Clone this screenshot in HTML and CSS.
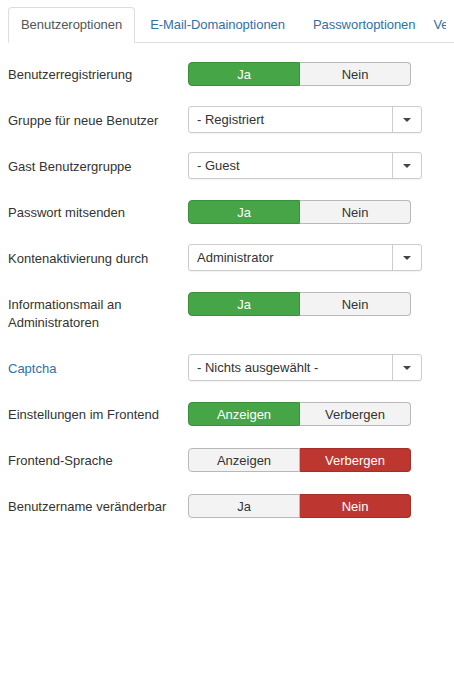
FILE: index.html
```html
<!DOCTYPE html>
<html lang="de">
<head>
<meta charset="utf-8">
<title>Benutzeroptionen</title>
<link rel="stylesheet" href="styles.css">
</head>
<body>
<div class="page">
  <div class="tabbar">
    <ul class="tabs">
      <li class="tab active"><a>Benutzeroptionen</a></li>
      <li class="tab"><a>E-Mail-Domainoptionen</a></li>
      <li class="tab"><a>Passwortoptionen</a></li>
      <li class="tab tab-more"><a>Verlauf</a></li>
    </ul>
  </div>
  <div class="form">
    <div class="row">
      <div class="label">Benutzerregistrierung</div>
      <div class="toggle"><span class="opt on-green">Ja</span><span class="opt">Nein</span></div>
    </div>
    <div class="row">
      <div class="label">Gruppe für neue Benutzer</div>
      <div class="select"><span class="val">- Registriert</span><span class="arrow"><i class="caret"></i></span></div>
    </div>
    <div class="row">
      <div class="label">Gast Benutzergruppe</div>
      <div class="select"><span class="val">- Guest</span><span class="arrow"><i class="caret"></i></span></div>
    </div>
    <div class="row">
      <div class="label">Passwort mitsenden</div>
      <div class="toggle"><span class="opt on-green">Ja</span><span class="opt">Nein</span></div>
    </div>
    <div class="row">
      <div class="label">Kontenaktivierung durch</div>
      <div class="select"><span class="val">Administrator</span><span class="arrow"><i class="caret"></i></span></div>
    </div>
    <div class="row">
      <div class="label">Informationsmail an Administratoren</div>
      <div class="toggle"><span class="opt on-green">Ja</span><span class="opt">Nein</span></div>
    </div>
    <div class="row">
      <div class="label link">Captcha</div>
      <div class="select"><span class="val">- Nichts ausgewählt -</span><span class="arrow"><i class="caret"></i></span></div>
    </div>
    <div class="row">
      <div class="label">Einstellungen im Frontend</div>
      <div class="toggle"><span class="opt on-green">Anzeigen</span><span class="opt">Verbergen</span></div>
    </div>
    <div class="row">
      <div class="label">Frontend-Sprache</div>
      <div class="toggle"><span class="opt">Anzeigen</span><span class="opt on-red">Verbergen</span></div>
    </div>
    <div class="row">
      <div class="label">Benutzername veränderbar</div>
      <div class="toggle"><span class="opt">Ja</span><span class="opt on-red">Nein</span></div>
    </div>
  </div>
</div>
</body>
</html>
```
FILE: styles.css
```css
html, body {
  margin: 0;
  padding: 0;
  background: #fff;
}
body {
  font-family: "Liberation Sans", Arial, sans-serif;
  font-size: 13px;
  line-height: 18px;
  color: #333;
  overflow: hidden;
}
.page {
  padding: 7px 0 0 8px;
}
.tabbar {
  border-bottom: 1px solid #ddd;
}
.tabs {
  position: relative;
  list-style: none;
  margin: 0 8px -1px 0;
  padding: 0;
  display: flex;
  white-space: nowrap;
  overflow: hidden;
}
.tab {
  margin: 0 2px 0 0;
  flex: none;
}
.tab-more {
  margin-left: -10px;
}
.tab a {
  display: block;
  padding: 8px 12px;
  line-height: 18px;
  letter-spacing: -0.05px;
  border: 1px solid transparent;
  border-radius: 4px 4px 0 0;
  color: #3071a9;
}
.tab.active a {
  color: #555;
  background: #fff;
  border-color: #ddd #ddd #fff;
}
.form {
  margin-top: 17px;
}
.row {
  display: flex;
  align-items: flex-start;
  min-height: 28px;
  margin-bottom: 18px;
}
.label {
  flex: none;
  width: 160px;
  margin-right: 20px;
  padding: 6px 0 4px;
  line-height: 18px;
  color: #333;
}
.label.link {
  color: #3071a9;
}
.toggle {
  margin-top: 2px;
  display: flex;
  width: 223px;
  height: 24px;
  box-sizing: border-box;
}
.opt {
  flex: 1 1 0;
  display: flex;
  align-items: center;
  justify-content: center;
  background: #f3f3f3;
  border: 1px solid #b8b8b8;
  color: #333;
  padding-top: 1px;
  box-sizing: border-box;
}
.opt:first-child {
  border-radius: 4px 0 0 4px;
}
.opt:last-child {
  border-radius: 0 4px 4px 0;
  border-left: none;
}
.opt.on-green {
  background: #46a546;
  border-color: #3c8f3c;
  color: #fff;
}
.opt.on-red {
  background: #bd362f;
  border-color: #a32f29;
  color: #fff;
}
.select {
  display: flex;
  width: 234px;
  height: 27px;
  box-sizing: border-box;
  border: 1px solid #ccc;
  border-radius: 3px;
  background: #fff;
  box-shadow: 0 1px 1px rgba(0,0,0,0.05);
}
.val {
  flex: 1;
  padding-left: 8px;
  line-height: 26px;
  color: #333;
}
.arrow {
  flex: none;
  width: 28px;
  border-left: 1px solid #ccc;
  display: flex;
  align-items: center;
  justify-content: center;
}
.caret {
  width: 0;
  height: 0;
  border-top: 4px solid #444;
  border-left: 4px solid transparent;
  border-right: 4px solid transparent;
}
```
